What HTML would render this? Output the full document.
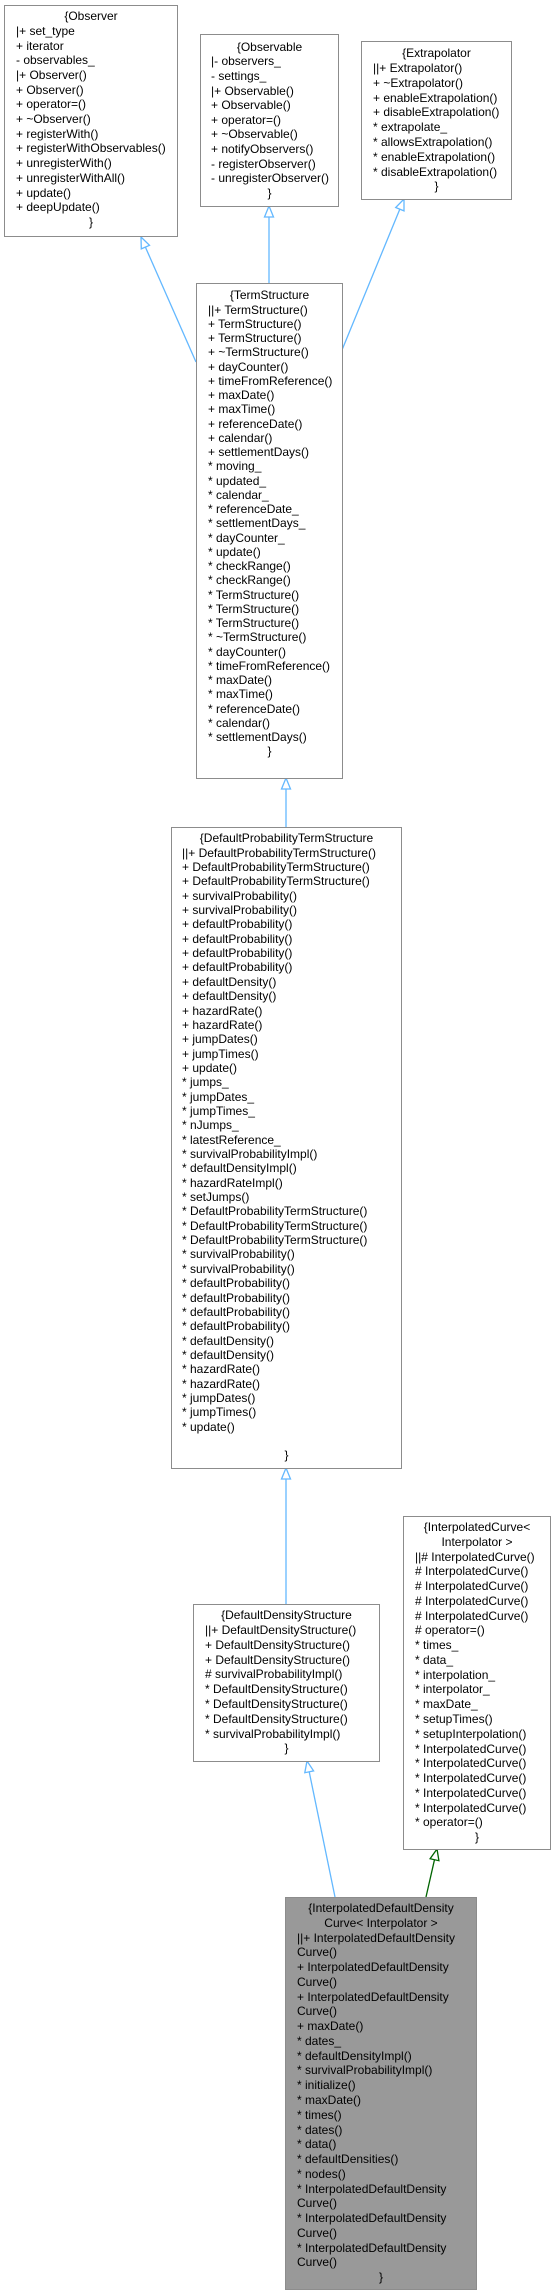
<!DOCTYPE html>
<html><head><meta charset="utf-8">
<style>
html,body{margin:0;padding:0;background:#fff;}
body{width:555px;height:2295px;position:relative;overflow:hidden;font-family:"Liberation Sans",Arial,sans-serif;font-size:12px;color:#000;}
.b{position:absolute;border:1px solid #8c8c8c;background:#fff;box-sizing:border-box;}
.l{position:absolute;white-space:pre;}
.c{left:0;right:0;text-align:center;}
svg{position:absolute;left:0;top:0;}
</style></head><body>
<svg width="555" height="2295">
<g stroke="#63b8ff" stroke-width="1.3" fill="#fff">
<line x1="196" y1="362" x2="145.4" y2="247.1"/>
<polygon points="141,237 149.5,245.3 141.3,248.9"/>
<line x1="269" y1="283" x2="269" y2="217"/>
<polygon points="269,206 264.5,217 273.5,217"/>
<line x1="342" y1="350" x2="399.8" y2="209.2"/>
<polygon points="404,199 404,210.9 395.7,207.5"/>
<line x1="286" y1="827" x2="286" y2="789"/>
<polygon points="286,778 281.5,789 290.5,789"/>
<line x1="286" y1="1604" x2="286" y2="1479"/>
<polygon points="286,1468 281.5,1479 290.5,1479"/>
<line x1="335" y1="1897" x2="309.2" y2="1771.8"/>
<polygon points="307,1761 313.6,1770.9 304.8,1772.7"/>
</g>
<g stroke="#006400" stroke-width="1.3" fill="#fff">
<line x1="426" y1="1897" x2="434.5" y2="1859.7"/>
<polygon points="437,1849 438.9,1860.7 430.1,1858.7"/>
</g>
</svg>

<div id="boxes"></div>
<script>
function box(x,y,w,h,first,lh,pad,title,lines,bg){
  var d=document.createElement('div');d.className='b';
  d.style.left=x+'px';d.style.top=y+'px';d.style.width=w+'px';d.style.height=h+'px';
  if(bg)d.style.background=bg;
  var c=first-y-lh/2-1,i;
  for(i=0;i<title.length;i++){var e=document.createElement('div');e.className='l c';e.style.top=c+'px';e.style.lineHeight=lh+'px';e.textContent=title[i];d.appendChild(e);c+=lh;}
  for(i=0;i<lines.length;i++){var e=document.createElement('div');e.className='l';e.style.left=pad+'px';e.style.top=c+'px';e.style.lineHeight=lh+'px';e.textContent=lines[i];d.appendChild(e);c+=lh;}
  var e=document.createElement('div');e.className='l c';e.style.top=c+'px';e.style.lineHeight=lh+'px';e.textContent='}';d.appendChild(e);
  document.body.appendChild(d);
}
box(4,5,174,232,16.5,14.7,11,['{Observer'],['|+ set_type','+ iterator','- observables_','|+ Observer()','+ Observer()','+ operator=()','+ ~Observer()','+ registerWith()','+ registerWithObservables()','+ unregisterWith()','+ unregisterWithAll()','+ update()','+ deepUpdate()']);
box(200,34,139,173,47,14.6,10,['{Observable'],['|- observers_','- settings_','|+ Observable()','+ Observable()','+ operator=()','+ ~Observable()','+ notifyObservers()','- registerObserver()','- unregisterObserver()']);
box(361,41,151,159,53.5,14.8,11,['{Extrapolator'],['||+ Extrapolator()','+ ~Extrapolator()','+ enableExtrapolation()','+ disableExtrapolation()','* extrapolate_','* allowsExtrapolation()','* enableExtrapolation()','* disableExtrapolation()']);
box(196,283,147,496,295.5,14.25,11,['{TermStructure'],['||+ TermStructure()','+ TermStructure()','+ TermStructure()','+ ~TermStructure()','+ dayCounter()','+ timeFromReference()','+ maxDate()','+ maxTime()','+ referenceDate()','+ calendar()','+ settlementDays()','* moving_','* updated_','* calendar_','* referenceDate_','* settlementDays_','* dayCounter_','* update()','* checkRange()','* checkRange()','* TermStructure()','* TermStructure()','* TermStructure()','* ~TermStructure()','* dayCounter()','* timeFromReference()','* maxDate()','* maxTime()','* referenceDate()','* calendar()','* settlementDays()']);
box(171,827,231,642,838.5,14.35,10,['{DefaultProbabilityTermStructure'],['||+ DefaultProbabilityTermStructure()','+ DefaultProbabilityTermStructure()','+ DefaultProbabilityTermStructure()','+ survivalProbability()','+ survivalProbability()','+ defaultProbability()','+ defaultProbability()','+ defaultProbability()','+ defaultProbability()','+ defaultDensity()','+ defaultDensity()','+ hazardRate()','+ hazardRate()','+ jumpDates()','+ jumpTimes()','+ update()','* jumps_','* jumpDates_','* jumpTimes_','* nJumps_','* latestReference_','* survivalProbabilityImpl()','* defaultDensityImpl()','* hazardRateImpl()','* setJumps()','* DefaultProbabilityTermStructure()','* DefaultProbabilityTermStructure()','* DefaultProbabilityTermStructure()','* survivalProbability()','* survivalProbability()','* defaultProbability()','* defaultProbability()','* defaultProbability()','* defaultProbability()','* defaultDensity()','* defaultDensity()','* hazardRate()','* hazardRate()','* jumpDates()','* jumpTimes()','* update()',' ']);
box(193,1604,187,158,1615.5,14.8,11,['{DefaultDensityStructure'],['||+ DefaultDensityStructure()','+ DefaultDensityStructure()','+ DefaultDensityStructure()','# survivalProbabilityImpl()','* DefaultDensityStructure()','* DefaultDensityStructure()','* DefaultDensityStructure()','* survivalProbabilityImpl()']);
box(403,1516,148,334,1527.5,14.76,11,['{InterpolatedCurve<','Interpolator >'],['||# InterpolatedCurve()','# InterpolatedCurve()','# InterpolatedCurve()','# InterpolatedCurve()','# InterpolatedCurve()','# operator=()','* times_','* data_','* interpolation_','* interpolator_','* maxDate_','* setupTimes()','* setupInterpolation()','* InterpolatedCurve()','* InterpolatedCurve()','* InterpolatedCurve()','* InterpolatedCurve()','* InterpolatedCurve()','* operator=()']);
box(285,1897,192,393,1908.5,14.76,11,['{InterpolatedDefaultDensity','Curve< Interpolator >'],['||+ InterpolatedDefaultDensity','Curve()','+ InterpolatedDefaultDensity','Curve()','+ InterpolatedDefaultDensity','Curve()','+ maxDate()','* dates_','* defaultDensityImpl()','* survivalProbabilityImpl()','* initialize()','* maxDate()','* times()','* dates()','* data()','* defaultDensities()','* nodes()','* InterpolatedDefaultDensity','Curve()','* InterpolatedDefaultDensity','Curve()','* InterpolatedDefaultDensity','Curve()'],'#999999');
</script>
</body></html>
